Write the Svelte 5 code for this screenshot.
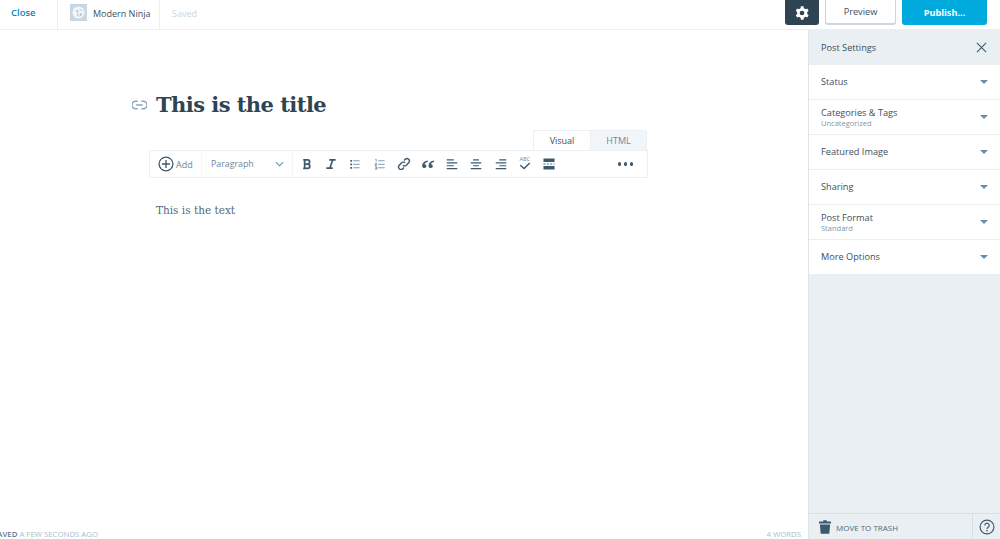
<script>
  const sections = [
    { title: 'Status' },
    { title: 'Categories & Tags', sub: 'Uncategorized' },
    { title: 'Featured Image' },
    { title: 'Sharing' },
    { title: 'Post Format', sub: 'Standard' },
    { title: 'More Options' }
  ];
</script>

<div class="page">
  <header class="topbar">
    <a class="close">Close</a>
    <div class="site">
      <span class="siteicon">
        <svg viewBox="0 0 24 24" width="13" height="13"><circle cx="12" cy="12" r="11" fill="#f3f6f8"/><path d="M7 8c3-2 5 0 5 2s-3 2-3 5 3 4 5 5M14 4c-1 3 2 4 3 5s2 1 3 1M15 14c2-1 3 0 4 1-1 2-2 3-4 4-1-2-1-3 0-5z" fill="#b5c5d3"/></svg>
      </span>
      <span class="sitename">Modern Ninja</span>
    </div>
    <span class="saved">Saved</span>
    <div class="actions">
      <button class="gear" aria-label="Settings">
        <svg viewBox="0 0 24 24" width="16" height="16"><path fill="#fff" d="M20 12c0-.6-.1-1.100-.2-1.600l2.100-1.700-2-3.400-2.500 1a8 8 0 0 0-2.700-1.600L14.300 2h-4l-.4 2.700A8 8 0 0 0 7.200 6.300l-2.500-1-2 3.400 2.100 1.700a8 8 0 0 0 0 3.200l-2.100 1.700 2 3.400 2.500-1a8 8 0 0 0 2.700 1.600l.4 2.700h4l.4-2.700a8 8 0 0 0 2.700-1.600l2.500 1 2-3.400-2.100-1.700c.1-.5.2-1 .2-1.600zm-8 3.500a3.500 3.500 0 1 1 0-7 3.500 3.500 0 0 1 0 7z"/></svg>
      </button>
      <button class="preview">Preview</button>
      <button class="publish">Publish...</button>
    </div>
  </header>

  <div class="body">
    <main class="main">
      <div class="editor">
        <div class="titlerow">
          <svg class="link" viewBox="0 0 16 10" width="15" height="10"><path fill="none" stroke="#87a6bc" stroke-width="1.500" d="M6 1H4a4 4 0 0 0 0 8h2M10 1h2a4 4 0 0 1 0 8h-2M4.500 5h7"/></svg>
          <h1>This is the title</h1>
        </div>
        <div class="tabs">
          <span class="tab active">Visual</span>
          <span class="tab">HTML</span>
        </div>
        <div class="toolbar">
          <div class="add">
            <svg viewBox="0 0 16 16" width="16" height="16"><circle cx="8" cy="8" r="6.900" fill="none" stroke="#3d596d" stroke-width="1.300"/><path d="M8 4v8M4 8h8" stroke="#3d596d" stroke-width="1.300"/></svg>
            <span>Add</span>
          </div>
          <div class="format">
            <span>Paragraph</span>
            <svg viewBox="0 0 10 6" width="9" height="6"><path d="M1 1l4 4 4-4" fill="none" stroke="#668eaa" stroke-width="1.200"/></svg>
          </div>
          <div class="tools">
            <svg viewBox="0 0 24 24"><path fill="none" stroke="#3d596d" stroke-width="3" d="M8 4v16M5.500 5H13a3.500 3.500 0 0 1 0 7H8m5 0a3.700 3.700 0 0 1 0 7.500H5.500"/></svg>
            <svg viewBox="0 0 24 24"><path fill="none" stroke="#3d596d" stroke-width="2.800" d="M9 5h11M4 19h11M15 5l-5 14"/></svg>
            <svg viewBox="0 0 24 24"><path fill="#3d596d" d="M4 5h3v3H4zM4 11h3v3H4zM4 17h3v3H4z"/><path stroke="#668eaa" stroke-width="1.500" d="M9 6.500h11M9 12.500h11M9 18.500h11"/></svg>
            <svg viewBox="0 0 24 24"><path fill="none" stroke="#3d596d" stroke-width="1" d="M4 4h1.500v4M3.500 11h2.500v2H4v2h2.500M3.500 17h3v4h-3M4 19h2.500"/><path stroke="#668eaa" stroke-width="1.500" d="M9 6.500h11M9 12.500h11M9 18.500h11"/></svg>
            <svg viewBox="0 0 24 24"><path fill="none" stroke="#3d596d" stroke-width="2.400" d="M10 14a4.200 4.200 0 0 0 6 0l4-4a4.200 4.200 0 0 0-6-6l-2 2M14 10a4.200 4.200 0 0 0-6 0l-4 4a4.200 4.200 0 0 0 6 6l2-2"/></svg>
            <svg viewBox="0 0 24 24"><path fill="#3d596d" d="M11.500 6C6.500 6.800 2 10 2 15c0 2.500 1.500 4 3.700 4s3.600-1.500 3.600-3.400-1.400-3.300-3.200-3.300c.5-1.700 2.500-3 5.400-3.700zM22.500 6c-5 .8-9.500 4-9.500 9 0 2.500 1.500 4 3.700 4s3.600-1.500 3.600-3.400-1.400-3.300-3.200-3.300c.5-1.700 2.500-3 5.400-3.700z"/></svg>
            <svg viewBox="0 0 24 24"><path stroke="#3d596d" stroke-width="2" d="M3 5h12M3 10h18M3 15h12M3 20h18"/></svg>
            <svg viewBox="0 0 24 24"><path stroke="#3d596d" stroke-width="2" d="M7 5h10M3 10h18M7 15h10M3 20h18"/></svg>
            <svg viewBox="0 0 24 24"><path stroke="#3d596d" stroke-width="2" d="M9 5h12M3 10h18M9 15h12M3 20h18"/></svg>
            <div class="spell">
              <span>ABC</span>
              <svg viewBox="0 0 14 9" width="12" height="8"><path d="M1.500 3.500L6 7.500l6.500-6.500" fill="none" stroke="#3d596d" stroke-width="1.600"/></svg>
            </div>
            <svg viewBox="0 0 24 24"><path fill="#3d596d" d="M2.500 2.500h19v6h-19zM2.500 15.500h19v6h-19z"/><path stroke="#3d596d" stroke-width="1.600" stroke-dasharray="3.500 2.250" d="M2.500 12h19"/></svg>
          </div>
          <div class="more"><i></i><i></i><i></i></div>
        </div>
        <p class="content">This is the text</p>
      </div>
      <footer class="status">
        <span class="savedmsg"><b>SAVED</b> A FEW SECONDS AGO</span>
        <span>4 WORDS</span>
      </footer>
    </main>

    <aside class="side">
      <div class="sidehead">
        <span>Post Settings</span>
        <svg viewBox="0 0 12 12" width="11" height="11"><path d="M1 1l10 10M11 1L1 11" stroke="#3d596d" stroke-width="1.200"/></svg>
      </div>
      <div class="sections">
        {#each sections as s}
          <div class="section">
            <div>
              <div class="stitle">{s.title}</div>
              {#if s.sub}<div class="ssub">{s.sub}</div>{/if}
            </div>
            <span class="caret"></span>
          </div>
        {/each}
      </div>
      <div class="sidefoot">
        <div class="trash">
          <svg viewBox="0 0 14 16" width="12" height="14"><path fill="#3d596d" d="M5 0h4v1.500h5V4H0V1.500h5zM1 5h12l-1 11H2z"/></svg>
          <span>MOVE TO TRASH</span>
        </div>
        <div class="help">
          <svg viewBox="0 0 18 18" width="16" height="16"><circle cx="9" cy="9" r="7.800" fill="none" stroke="#3d596d" stroke-width="1.300"/><path d="M6.500 7.200a2.500 2.500 0 1 1 3.800 2.100c-.9.600-1.300 1-1.300 2" fill="none" stroke="#3d596d" stroke-width="1.300"/><rect x="8.200" y="12.300" width="1.600" height="1.600" fill="#3d596d"/></svg>
        </div>
      </div>
    </aside>
  </div>
</div>

<style>
  :global(body) { margin: 0; background: #fff; }
  .page {
    width: 1000px; height: 539px; display: flex; flex-direction: column; overflow: hidden;
    font-family: "Open Sans", sans-serif; color: #2e4453;
  }
  .topbar {
    height: 29px; flex: none; display: flex; align-items: center;
    border-bottom: 1px solid #e9eff3;
  }
  .close {
    width: 58px; box-sizing: border-box; padding-left: 11px; font-size: 9.500px; font-weight: 600;
    color: #0087be; height: 29px; line-height: 26px; border-right: 1px solid #e9eff3;
  }
  .site {
    width: 102px; box-sizing: border-box; height: 29px; display: flex; align-items: center;
    padding-left: 12px; gap: 6px; border-right: 1px solid #e9eff3;
  }
  .siteicon {
    width: 17px; height: 17px; background: #c8d7e1; display: flex; align-items: center; justify-content: center;
    margin-top: -4px;
  }
  .sitename { font-size: 9px; color: #3c4f5d; margin-top: -3px; }
  .saved { margin-left: 12px; font-size: 9px; color: #c8d7e1; margin-top: -3px; }
  .actions { margin-left: auto; display: flex; align-items: flex-start; height: 29px; padding-right: 13px; }
  button { font-family: inherit; box-sizing: border-box; padding: 0; }
  .gear {
    width: 34px; height: 25px; border: 0; border-radius: 0 0 3px 3px; background: #2e4453;
    display: flex; align-items: center; justify-content: center; margin-right: 6px;
  }
  .preview {
    width: 71px; height: 25px; background: #fff; border: 1px solid #c8d7e1; border-top: 0; border-bottom-width: 2px;
    border-radius: 0 0 3px 3px; font-size: 9.200px; font-weight: 500; color: #3c4f5d; margin-right: 6px;
  }
  .publish {
    width: 85px; height: 25px; background: #00aadc; border: 0; border-radius: 0 0 3px 3px;
    font-size: 9.200px; font-weight: 700; color: #fff;
  }
  .body { flex: 1; display: flex; min-height: 0; }
  .main { flex: 1; min-width: 0; display: flex; flex-direction: column; }
  .editor { flex: 1; width: 499px; margin-left: 149px; padding-top: 50px; box-sizing: border-box; }
  .titlerow { position: relative; height: 50px; padding-left: 7px; display: flex; align-items: center; }
  .link { position: absolute; left: -17px; top: 20px; }
  h1 {
    margin: 0; font-family: "DejaVu Serif", serif; font-weight: 700; font-size: 21px; letter-spacing: -0.55px; line-height: 30px;
    color: #2e4453; white-space: nowrap;
  }
  .tabs { display: flex; justify-content: flex-end; height: 20px; padding-right: 1px; }
  .tab {
    width: 57px; box-sizing: border-box; text-align: center; font-size: 9px; line-height: 20px;
    color: #6b8799; background: #f3f6f8; border: 1px solid #e9eff3; border-bottom: 0;
    border-radius: 0 3px 0 0;
  }
  .tab.active { background: #fff; color: #3c4f5d; border-radius: 3px 0 0 0; border-right: 0; }
  .toolbar {
    height: 28px; box-sizing: border-box; border: 1px solid #e9eff3; display: flex; align-items: center;
  }
  .add {
    width: 52px; height: 26px; box-sizing: border-box; display: flex; align-items: center; gap: 2px; padding-left: 8px;
    font-size: 9px; color: #6b8799; border-right: 1px solid #f3f6f8;
  }
  .format {
    width: 91px; height: 26px; box-sizing: border-box; display: flex; align-items: center; justify-content: space-between;
    padding: 0 8px 0 9px; font-size: 8.800px; color: #6b8799; border-right: 1px solid #f3f6f8;
  }
  .tools { display: flex; align-items: center; gap: 10.200px; padding-left: 7px; }
  .tools > svg { width: 14px; height: 14px; display: block; }
  .spell { width: 14px; display: flex; flex-direction: column; align-items: center; line-height: 6px; margin-top: -2px; }
  .spell span { font-size: 5.500px; color: #668eaa; height: 6px; }
  .more { margin-left: auto; margin-right: 14px; display: flex; gap: 2.500px; }
  .more i { width: 3.500px; height: 3.500px; border-radius: 50%; background: #3d596d; display: block; }
  .content {
    margin: 24px 0 0 7px; font-family: "DejaVu Serif", serif; font-size: 10.500px; line-height: 16px; color: #4f6a7d;
  }
  .status {
    height: 14px; flex: none; display: flex; justify-content: space-between; align-items: flex-end;
    font-size: 7.800px; line-height: 10px; color: #a8bece; padding-right: 7px; overflow: hidden;
  }
  .savedmsg { margin-left: -7px; white-space: nowrap; }
  .savedmsg b { font-weight: 600; color: #537994; }
  .side {
    width: 192px; flex: none; box-sizing: border-box; background: #e9eff3; border-left: 1px solid #dde5eb;
    display: flex; flex-direction: column;
  }
  .sidehead {
    height: 35px; flex: none; box-sizing: border-box; display: flex; align-items: center; justify-content: space-between;
    padding: 0 13px 0 12px; font-size: 9.200px; font-weight: 500; color: #3c4f5d;
  }
  .sections { flex: 1; }
  .section {
    height: 35px; box-sizing: border-box; background: #fff; border-bottom: 1px solid #e9eff3;
    display: flex; align-items: center; justify-content: space-between; padding: 0 12px;
  }
  .stitle { font-size: 9.200px; font-weight: 500; color: #3c4f5d; line-height: 12px; }
  .ssub { font-size: 7.500px; color: #7f97a8; line-height: 9px; }
  .caret {
    width: 0; height: 0; border-left: 4px solid transparent; border-right: 4px solid transparent;
    border-top: 4px solid #668eaa;
  }
  .sidefoot { height: 25px; flex: none; display: flex; border-top: 1px solid #d5e0e7; }
  .trash {
    flex: 1; display: flex; align-items: center; gap: 5px; padding-left: 10px; padding-top: 1px;
    font-size: 8px; color: #4f6a7d;
  }
  .help { width: 27px; display: flex; align-items: center; justify-content: center; border-left: 1px solid #d5e0e7; }
</style>
